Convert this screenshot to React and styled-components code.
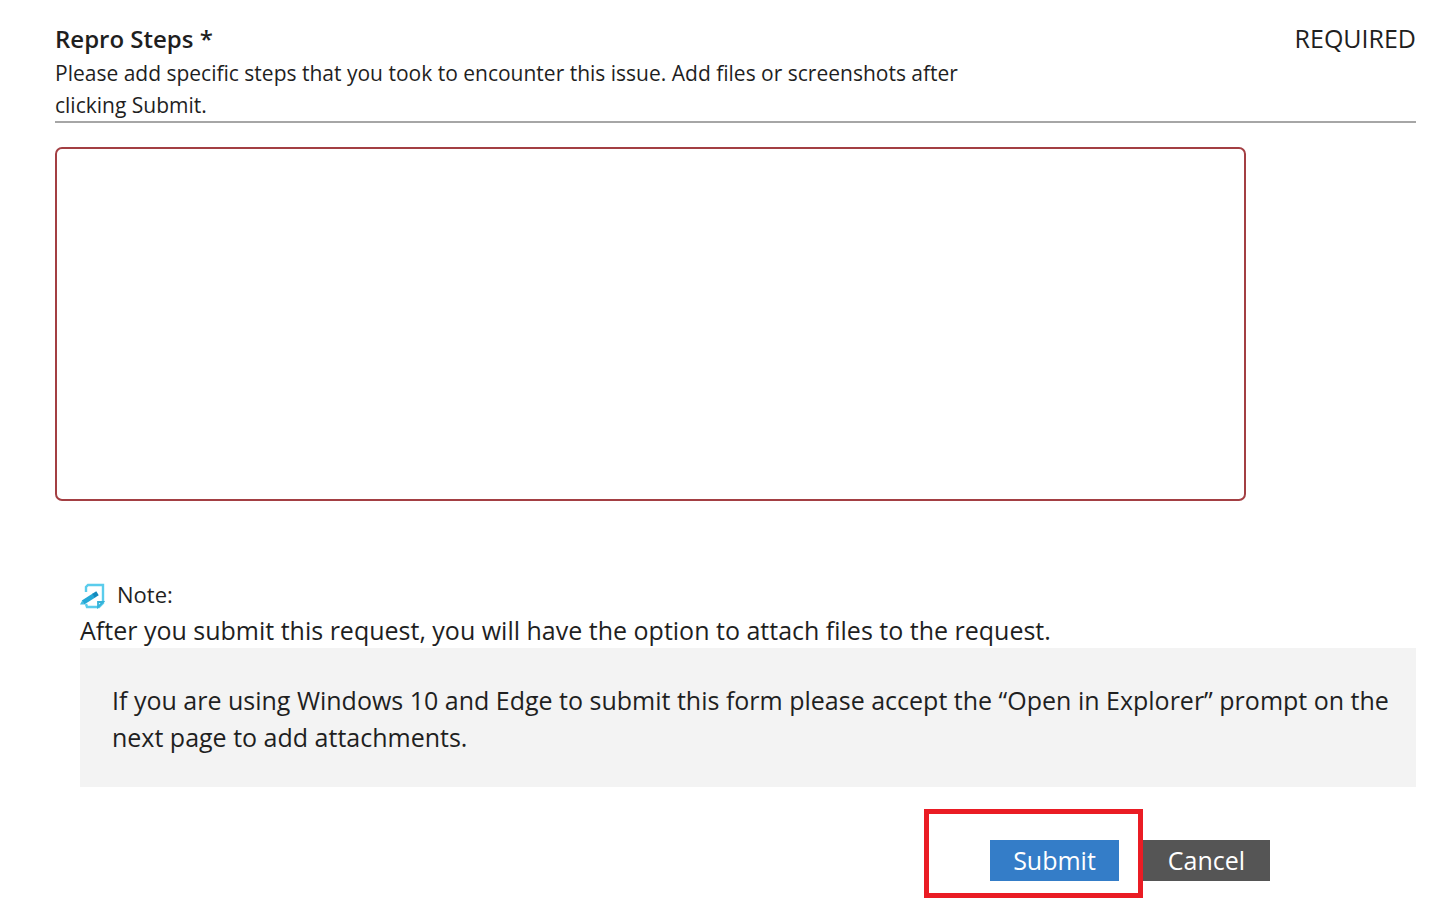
import React from "react";
import styled, { createGlobalStyle } from "styled-components";

const GlobalStyle = createGlobalStyle`
  *, *::before, *::after { box-sizing: border-box; }
  body {
    margin: 0;
    background: #ffffff;
    color: #1f1f1f;
    font-family: "Segoe UI", "Open Sans", sans-serif;
    font-size: 25px;
    line-height: 36px;
  }
`;

const Page = styled.form`
  display: flex;
  flex-direction: column;
  padding: 20px 25px 8px 55px;
`;

const FieldHeader = styled.header`
  border-bottom: 2px solid #a6a6a6;
`;

const TitleRow = styled.div`
  display: flex;
  justify-content: space-between;
  line-height: 37px;
`;

const FieldLabel = styled.label`
  font-size: 24px;
  font-weight: 600;
`;

const Description = styled.p`
  width: 70%;
  margin: 0;
  font-size: 21px;
  line-height: 32px;
`;

const StepsInput = styled.textarea`
  display: block;
  width: 87.5%;
  height: 354px;
  margin: 24px 0 0;
  padding: 12px;
  border: 2px solid #a33f43;
  border-radius: 7px;
  background: #ffffff;
  color: inherit;
  font: inherit;
  resize: none;
  outline: none;
`;

const Note = styled.section`
  margin: 75px 0 0 25px;
`;

const NoteTitle = styled.div`
  display: flex;
  align-items: center;
  gap: 12px;
  font-size: 22px;
`;

const NoteText = styled.p`
  margin: 0;
`;

const Callout = styled.p`
  margin: 0;
  padding: 34px 24px 31px 32px;
  background: #f3f3f3;
  line-height: 37px;
`;

const Actions = styled.div`
  display: flex;
  justify-content: flex-end;
  align-items: center;
  margin-top: 22px;
  padding-right: 146px;
`;

const Highlight = styled.div`
  padding: 26px 19px 12px 61px;
  border: 5px solid #ea1c24;
`;

const Button = styled.button`
  display: block;
  width: ${({ $width }) => $width}px;
  height: 41px;
  padding: 0;
  border: 0;
  background: ${({ $primary }) => ($primary ? "#347dc8" : "#555555")};
  color: #ffffff;
  font: inherit;
  line-height: 41px;
  cursor: pointer;
`;

const CancelSlot = styled.div`
  padding: 31px 0 17px;
`;

function NoteIcon() {
  return (
    <svg width="25" height="30" viewBox="0 -4 25 30" fill="none" aria-hidden="true">
      <path d="M6 9V4l2-2h15v18l-4 4H7l-1-3" stroke="#5accec" strokeWidth="2.4" />
      <path d="M18 24v-5h5z" fill="#d8f4fb" stroke="#35b2d9" strokeWidth="1.8" />
      <path d="M3 19.5 14 12.5" stroke="#25a8d6" strokeWidth="4.6" />
      <path d="M13.5 12.8 17.5 10.3" stroke="#1289bd" strokeWidth="4.6" />
      <path d="M0 21.5 2.2 17.4 4.6 21.4z" fill="#46bde1" />
    </svg>
  );
}

export default function App() {
  return (
    <>
      <GlobalStyle />
      <Page onSubmit={(event) => event.preventDefault()}>
        <FieldHeader>
          <TitleRow>
            <FieldLabel htmlFor="repro-steps">Repro Steps *</FieldLabel>
            <span>REQUIRED</span>
          </TitleRow>
          <Description id="repro-help">
            Please add specific steps that you took to encounter this issue. Add files or
            screenshots after clicking Submit.
          </Description>
        </FieldHeader>
        <StepsInput id="repro-steps" aria-describedby="repro-help" required />
        <Note>
          <NoteTitle>
            <NoteIcon />
            <span>Note:</span>
          </NoteTitle>
          <NoteText>
            After you submit this request, you will have the option to attach files to the
            request.
          </NoteText>
          <Callout>
            If you are using Windows 10 and Edge to submit this form please accept the “Open in
            Explorer” prompt on the next page to add attachments.
          </Callout>
        </Note>
        <Actions>
          <Highlight>
            <Button type="submit" $primary $width={129}>Submit</Button>
          </Highlight>
          <CancelSlot>
            <Button type="button" $width={127}>Cancel</Button>
          </CancelSlot>
        </Actions>
      </Page>
    </>
  );
}
